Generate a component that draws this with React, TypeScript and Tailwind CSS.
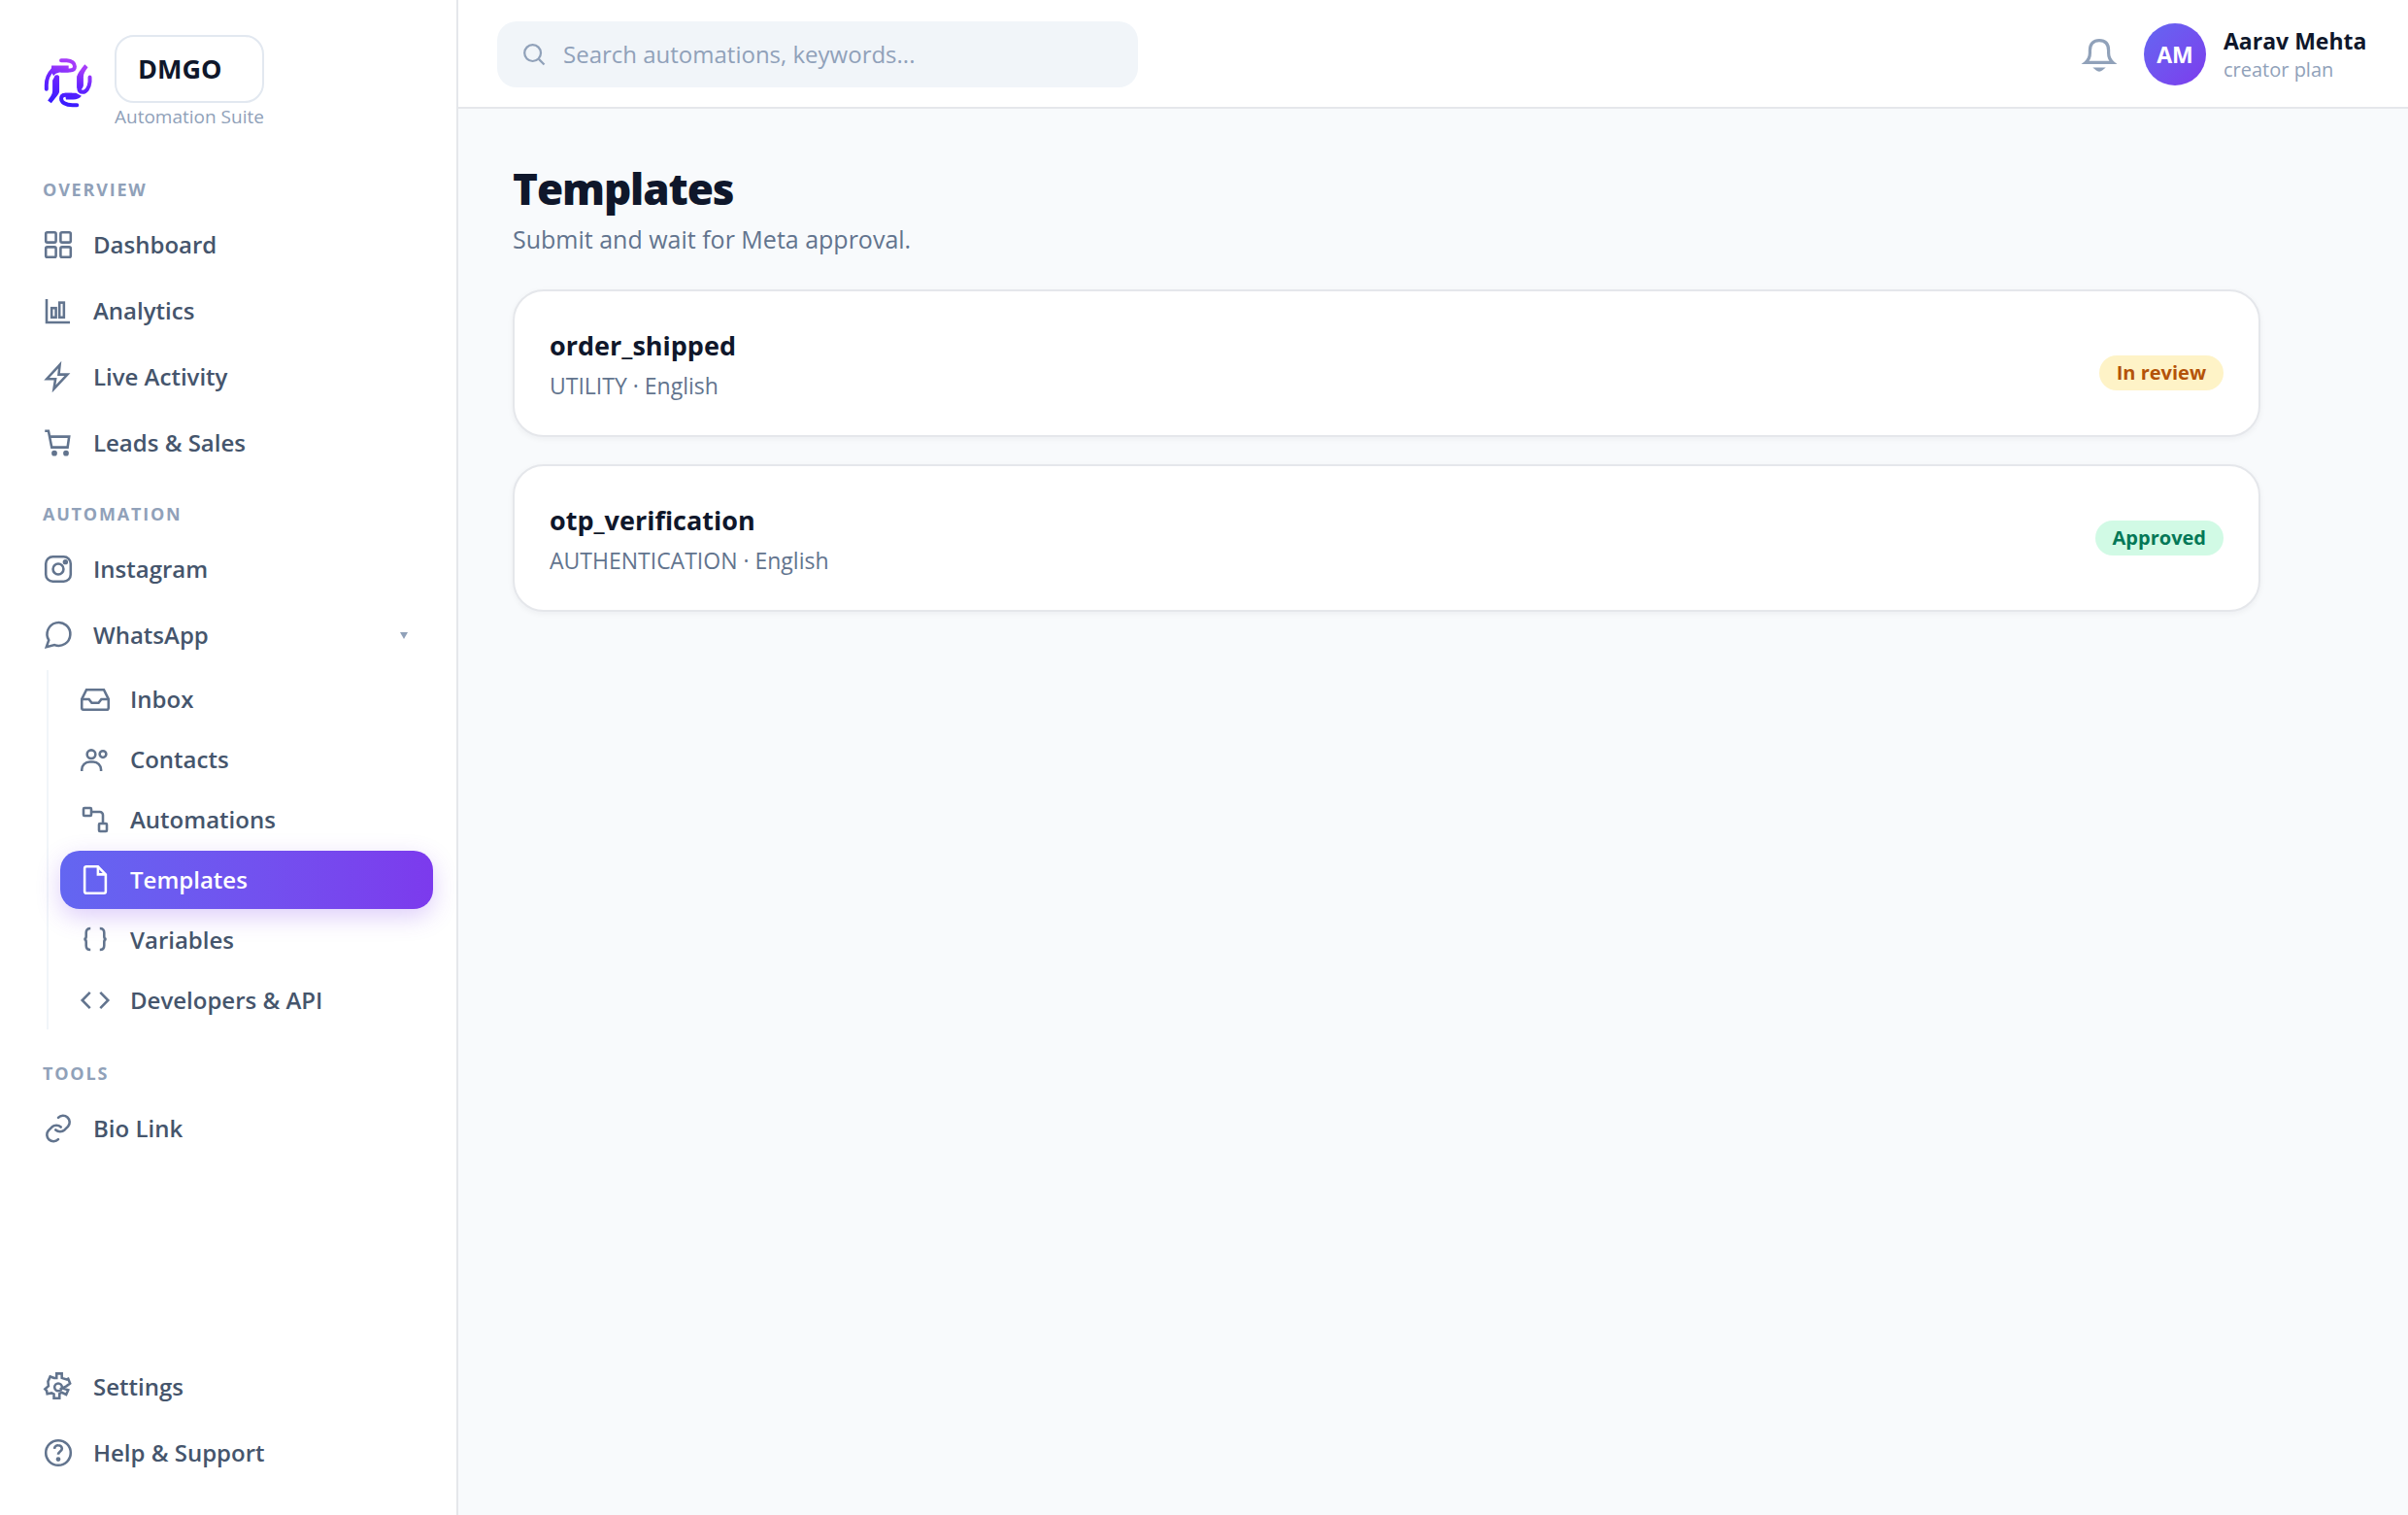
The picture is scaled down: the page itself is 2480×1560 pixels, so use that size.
import type { ReactNode } from "react";

const icons: Record<string, ReactNode> = {
  dashboard: (
    <>
      <rect x="2" y="2" width="6.5" height="6.5" rx="1" />
      <rect x="11.5" y="2" width="6.5" height="6.5" rx="1" />
      <rect x="2" y="11.5" width="6.5" height="6.5" rx="1" />
      <rect x="11.5" y="11.5" width="6.5" height="6.5" rx="1" />
    </>
  ),
  analytics: (
    <>
      <path d="M2.5 2.5v15h15" />
      <rect x="5.75" y="8.25" width="2.75" height="6" />
      <rect x="10.75" y="4.75" width="2.9" height="9.5" />
    </>
  ),
  activity: <path d="M11 2.2 2.6 11.4h5.6l-1 6.4 8.7-9.3h-5.6z" />,
  sales: (
    <>
      <path d="M1.4 2.4h2.3l2.1 10.5H16L17 6H4.4" />
      <circle cx="7.5" cy="16.7" r="1" fill="currentColor" />
      <circle cx="15" cy="16.7" r="1" fill="currentColor" />
    </>
  ),
  instagram: (
    <>
      <rect x="2" y="2" width="16" height="16" rx="4.5" />
      <circle cx="10" cy="10" r="3.4" />
      <circle cx="14.6" cy="5.4" r="0.9" fill="currentColor" />
    </>
  ),
  whatsapp: <path d="M2.4 17.6 3.9 13.2A7.45 7.45 0 1 1 7.6 16.3Z" />,
  inbox: (
    <>
      <path d="M4.4 3.9h11.2l3 6v5.8a1 1 0 0 1-1 1H2.4a1 1 0 0 1-1-1V9.9z" />
      <path d="M1.4 10H6l1.8 2.4h4.4L14 10h4.6" />
    </>
  ),
  contacts: (
    <>
      <circle cx="7.5" cy="6.7" r="2.7" />
      <circle cx="15" cy="6.6" r="2.1" />
      <path d="M1.4 17.5v-.9a5 5 0 0 1 5-5h2.4a5 5 0 0 1 5 5v.9" />
    </>
  ),
  automations: (
    <>
      <rect x="2.5" y="2.5" width="5" height="5" rx="0.6" />
      <rect x="12.5" y="12.5" width="5" height="5" rx="0.6" />
      <path d="M7.5 5H13a2 2 0 0 1 2 2v5.5" />
    </>
  ),
  templates: (
    <>
      <path d="M11.8 1.4H4.3a1.1 1.1 0 0 0-1.1 1.1v15a1.1 1.1 0 0 0 1.1 1.1h11.4a1.1 1.1 0 0 0 1.1-1.1V6.5z" />
      <path d="M11.8 1.4v5.1h5" />
    </>
  ),
  variables: (
    <>
      <path d="M7 2.5c-2.2 0-2.8 1-2.8 2.7v2.4c0 1.1-.5 1.8-1.5 1.8 1 0 1.5.7 1.5 1.8v2.4c0 1.7.6 2.7 2.8 2.7" />
      <path d="M13 2.5c2.2 0 2.8 1 2.8 2.7v2.4c0 1.1.5 1.8 1.5 1.8-1 0-1.5.7-1.5 1.8v2.4c0 1.7-.6 2.7-2.8 2.7" />
    </>
  ),
  developers: <path d="m6.7 4.9-5 5.1 5 5.1M13.3 4.9l5 5.1-5 5.1" />,
  link: (
    <g strokeLinecap="round">
      <path d="M10 3a4.25 4.25 0 0 1 6.3 5.7l-2.2 2.2a4.3 4.3 0 0 1-5.8 0" />
      <path d="M11.7 9.1a4.3 4.3 0 0 0-5.8 0l-2.2 2.2A4.25 4.25 0 0 0 10 17" />
    </g>
  ),
  settings: (
    <>
      <circle cx="10" cy="10.2" r="2.4" />
      <path d="M8.9 4.4V1.5h3.4v2.8l3 1 1.1-.5 1.2 3-2.4 1.8-2.6 1.3 3.8 1.2-1.3 2.9-2.9-1.4-1.4.9v2.9H7.2v-2.7l-1.5-.7-2.8.5-.4-2-1-1 2.2-2-.3-2.9 1.4-3.2 2.6 1z" />
    </>
  ),
  help: (
    <>
      <circle cx="10" cy="10" r="8" />
      <path d="M7.5 7.4A2.4 2.4 0 0 1 10 5.2c1.4 0 2.4.9 2.4 2.1 0 1.7-2.4 1.9-2.4 3.8" />
      <circle cx="10" cy="14.1" r="0.7" fill="currentColor" />
    </>
  ),
  search: (
    <>
      <circle cx="9" cy="9" r="6" />
      <path d="m13.5 13.5 4 4" />
    </>
  ),
  bell: (
    <>
      <path d="M3 14.2c1.6-1.3 2.2-2.9 2.2-4.9V8c0-3.5 1.9-5.2 4.8-5.2s4.8 1.7 4.8 5.2v1.3c0 2 .6 3.6 2.2 4.9z" />
      <path d="M8.8 17.5c.7.6 1.7.6 2.4 0z" />
    </>
  ),
};

const Icon = ({ name, className }: { name: string; className: string }) => (
  <svg viewBox="0 0 20 20" fill="none" stroke="currentColor" strokeWidth="1.6" className={`shrink-0 ${className}`} aria-hidden="true">
    {icons[name]}
  </svg>
);

const Logo = () => (
  <svg viewBox="132 178 156 160" className="h-[53px] w-[52px] shrink-0" aria-hidden="true">
    <defs>
      <linearGradient id="logo-fill" gradientUnits="userSpaceOnUse" x1="186" y1="336" x2="230" y2="184">
        <stop offset="0.1" stopColor="#3a1cff" />
        <stop offset="0.55" stopColor="#6a24ff" />
        <stop offset="0.85" stopColor="#a63cfa" />
      </linearGradient>
      <mask id="logo-mask" maskUnits="userSpaceOnUse" x="132" y="178" width="156" height="160">
        <g fill="none" stroke="#fff" strokeWidth="12" strokeLinecap="round">
          <path d="M189 188H206C223 188 231 198 231 207C231 215 226 219 216 219H190" />
          <path d="M143 277V264C143 246 151 228 163 216" />
          <path d="M278 240V254C276 274 266 286 256 286C248 286 244 280 244 272V240" />
          <path d="M238 327H224C202 327 189 317 189 306C189 298 194 295 202 295H222" />
        </g>
        <g fill="#fff">
          <path d="M159 204H212V225H190C176 225 170 230 165 236L158 222Z" />
          <path d="M168 238C168 231 183 231 183 238V284C183 292 176 298 158 321L147 312C160 296 162 290 162 280V250Z" />
          <path d="M238 240C238 230 250 216 262 200L272 209C262 222 258 230 258 240V266C256 274 252 280 244 280L238 272Z" />
          <path d="M200 289H235L252 298C246 306 238 309 226 309H204Z" />
        </g>
      </mask>
    </defs>
    <rect x="132" y="178" width="156" height="160" fill="url(#logo-fill)" mask="url(#logo-mask)" />
  </svg>
);

const NavItem = ({ icon, label }: { icon: string; label: string }) => (
  <a href="#" className="flex h-16 items-center gap-5 rounded-2xl px-5">
    <Icon name={icon} className="size-8 text-slate-500" />
    {label}
  </a>
);

const SectionLabel = ({ children }: { children: ReactNode }) => (
  <h2 className="px-5 pt-7 pb-3 text-[18px] leading-[26px] font-bold tracking-[0.1em] text-slate-400">{children}</h2>
);

const overview = [
  { icon: "dashboard", label: "Dashboard" },
  { icon: "analytics", label: "Analytics" },
  { icon: "activity", label: "Live Activity" },
  { icon: "sales", label: "Leads & Sales" },
];

const whatsapp = [
  { icon: "inbox", label: "Inbox" },
  { icon: "contacts", label: "Contacts" },
  { icon: "automations", label: "Automations" },
  { icon: "templates", label: "Templates", active: true },
  { icon: "variables", label: "Variables" },
  { icon: "developers", label: "Developers & API" },
];

const templates = [
  { name: "order_shipped", meta: "UTILITY · English", status: "In review", slot: "pt-5", tone: "bg-[#fef3c7] text-[#b45309]" },
  { name: "otp_verification", meta: "AUTHENTICATION · English", status: "Approved", slot: "", tone: "bg-[#d1fae5] text-[#047857]" },
];

const Sidebar = () => (
  <aside className="flex w-[472px] shrink-0 flex-col border-r-2 border-gray-200 bg-white px-6 pt-9 pb-8">
    <div className="flex items-center gap-[22px] px-5 pb-5">
      <Logo />
      <div>
        <a href="#" className="flex h-[70px] items-center rounded-[20px] border-2 border-slate-200 px-[22px] text-[27px] font-bold text-slate-900">
          DMGO
        </a>
        <p className="text-[19px] leading-7 text-slate-400">Automation Suite</p>
      </div>
    </div>

    <nav className="flex grow flex-col text-[24px] font-semibold text-slate-600">
      <SectionLabel>OVERVIEW</SectionLabel>
      <div className="flex flex-col gap-1">
        {overview.map((item) => (
          <NavItem key={item.label} icon={item.icon} label={item.label} />
        ))}
      </div>

      <SectionLabel>AUTOMATION</SectionLabel>
      <div className="flex flex-col gap-1">
        <NavItem icon="instagram" label="Instagram" />
        <button type="button" className="flex h-16 items-center gap-5 rounded-2xl px-5 text-left">
          <Icon name="whatsapp" className="size-8 text-slate-500" />
          <span className="grow">WhatsApp</span>
          <svg viewBox="0 0 8 7" className="mr-1.5 h-[7px] w-2 fill-slate-400" aria-hidden="true">
            <path d="M0 0h8L4 7z" />
          </svg>
        </button>
        <div className="mb-1 ml-6 flex flex-col gap-0.5 border-l-2 border-slate-100 pl-3">
          {whatsapp.map((item) => (
            <a
              key={item.label}
              href="#"
              className={`flex h-15 items-center gap-5 rounded-[20px] px-5 ${
                item.active
                  ? "bg-linear-to-r from-[#6366f1] to-[#7c3aed] text-white shadow-[0_8px_24px_rgba(124,58,237,0.25)]"
                  : ""
              }`}
            >
              <Icon name={item.icon} className={item.active ? "size-8 text-white" : "size-8 text-slate-500"} />
              {item.label}
            </a>
          ))}
        </div>
      </div>

      <SectionLabel>TOOLS</SectionLabel>
      <NavItem icon="link" label="Bio Link" />

      <div className="mt-auto flex flex-col gap-1">
        <NavItem icon="settings" label="Settings" />
        <NavItem icon="help" label="Help & Support" />
      </div>
    </nav>
  </aside>
);

const Header = () => (
  <header className="flex items-center justify-between border-b-2 border-gray-200 bg-white px-10 pt-[22px] pb-5">
    <label className="flex h-[68px] w-[660px] items-center gap-4 rounded-[20px] bg-slate-100 px-6">
      <Icon name="search" className="size-7 text-slate-400" />
      <input
        type="search"
        aria-label="Search"
        placeholder="Search automations, keywords..."
        className="min-w-0 grow bg-transparent text-[24px] text-slate-900 outline-none placeholder:text-slate-400"
      />
    </label>
    <div className="flex items-center">
      <button type="button" aria-label="Notifications" className="mr-[26px]">
        <Icon name="bell" className="size-10 text-slate-400" />
      </button>
      <div className="mr-[18px] flex size-16 items-center justify-center rounded-full bg-linear-to-br from-[#6366f1] to-[#7c3aed] text-[23px] font-bold text-white">
        AM
      </div>
      <div className="min-w-[150px]">
        <p className="text-[23px] leading-8 font-bold text-slate-900">Aarav Mehta</p>
        <p className="text-[20px] leading-7 text-slate-400">creator plan</p>
      </div>
    </div>
  </header>
);

const App = () => {
  return (
    <div className="flex min-h-screen bg-slate-50 font-['Open_Sans','Noto_Sans',sans-serif]">
      <Sidebar />
      <div className="min-w-0 grow">
        <Header />
        <main className="max-w-[1912px] px-14 pt-13">
          <h1 className="text-[44px] leading-[60px] font-extrabold tracking-tight text-slate-900">Templates</h1>
          <p className="mt-1 text-[25px] leading-9 text-slate-500">Submit and wait for Meta approval.</p>
          <ul className="mt-[34px] flex flex-col gap-7">
            {templates.map((t) => (
              <li
                key={t.name}
                className="flex items-center justify-between rounded-[32px] border-2 border-gray-200 bg-white p-9 shadow-[0_2px_6px_rgba(15,23,42,0.05)]"
              >
                <div>
                  <h3 className="text-[27px] leading-10 font-bold text-slate-900">{t.name}</h3>
                  <p className="mt-1.5 text-[23px] leading-[30px] text-slate-500">{t.meta}</p>
                </div>
                <div className={t.slot}>
                  <span className={`flex h-9 items-center rounded-full px-[18px] text-[20px] font-bold ${t.tone}`}>{t.status}</span>
                </div>
              </li>
            ))}
          </ul>
        </main>
      </div>
    </div>
  );
};

export default App;
